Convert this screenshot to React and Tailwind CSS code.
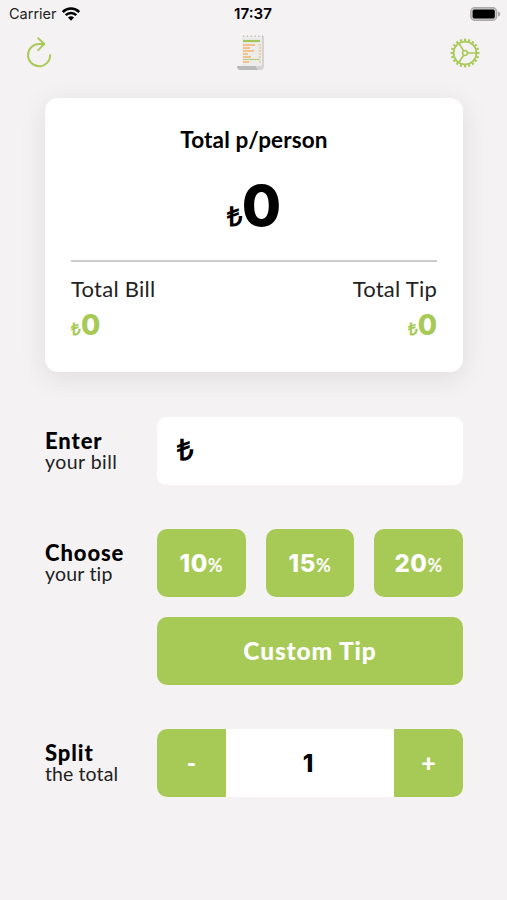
import React, { useState } from 'react';

const teeth = Array.from({ length: 20 }, (_, i) => i * 18);

const ResetIcon = () => (
  <svg width="26" height="32" viewBox="0 0 26 32" fill="none" stroke="#a9ca58" strokeWidth="1.9" strokeLinecap="round" strokeLinejoin="round">
    <path d="M24.2 17.9A11.1 11.1 0 1 1 13.1 7H18" />
    <path d="M12.2 1.2L18.3 7L12.2 13.2" />
  </svg>
);

const GearIcon = () => (
  <svg width="30" height="30" viewBox="-15 -15 30 30" fill="none" stroke="#a9ca58" strokeWidth="1.7">
    <circle r="11.4" />
    <circle r="2.5" />
    <path d="M2.6 0H11.3M-1.4 -2.2L-6.1 -9.6M-1.4 2.2L-6.1 9.6" />
    {teeth.map((angle) => (
      <path key={angle} d="M12 0H14.4" strokeWidth="2.2" transform={`rotate(${angle})`} />
    ))}
  </svg>
);

const ReceiptIcon = () => (
  <svg width="28" height="36" viewBox="0 0 28 36">
    <path d="M5 1H27V31Q27 35 23 35H4Q0 35 0 31H5Z" fill="#d3d3d3" />
    <path d="M5 1H25V31H5Z" fill="#ececea" />
    <path d="M0 31H19Q19 34 22 35H4Q0 35 0 31Z" fill="#b9bbbb" />
    <path d="M6 1.2H26" stroke="#bbb" strokeWidth="1.6" strokeDasharray="1.3 2.5" />
    <path d="M6 6H23" stroke="#a1c65b" strokeWidth="2.2" />
    <path d="M6 10H18M6 13H13M6 16H17M6 19H11M6 22H14M6 27H12" stroke="#f4b26f" strokeWidth="1.4" />
    <path d="M21.5 10H24M22 13H24M21.5 16H24M22 19H24M21.5 22H24M22 27H24" stroke="#efc694" strokeWidth="1.3" />
    <path d="M6 24.5H23" stroke="#b7cf80" strokeWidth="1.2" />
  </svg>
);

const WifiIcon = () => (
  <svg width="18" height="14" viewBox="0 0 18 14" fill="none" stroke="#000" strokeWidth="2.5">
    <path d="M.8 5A11.6 11.6 0 0 1 17.2 5" />
    <path d="M3.7 8.2A7.5 7.5 0 0 1 14.3 8.2" />
    <path d="M6 10.6A4.3 4.3 0 0 1 12 10.6L9 13.7Z" fill="#000" stroke="none" />
  </svg>
);

const BatteryIcon = () => (
  <svg width="31" height="14" viewBox="0 0 31 14">
    <rect x=".8" y=".8" width="25.8" height="12.4" rx="3.8" fill="#d0cfcf" stroke="#aaa" strokeWidth="1.4" />
    <rect x="2.6" y="2.6" width="22.2" height="8.8" rx="1.6" fill="#000" />
    <path d="M28 4.6Q30.4 5.2 30.4 7T28 9.4Z" fill="#aaa" />
  </svg>
);

const Label = ({ title, text, spacing }) => (
  <div className="w-28 h-[68px] shrink-0 flex flex-col justify-center">
    <p className="text-[22px] leading-[21px] font-black tracking-[0.9px]">{title}</p>
    <p className={`text-[19.5px] leading-[22px] text-[#222] ${spacing}`}>{text}</p>
  </div>
);

const Amount = () => (
  <p className="pt-[6px] leading-[32px] font-extrabold tracking-normal text-[#a7ca57]">
    <span className="text-[17px] font-['Open_Sans',sans-serif]">₺</span>
    <span className="text-[28px] font-[Inter,sans-serif]">0</span>
  </p>
);

const App = () => {
  const [people, setPeople] = useState(1);

  return (
    <div className="h-[900px] w-full overflow-hidden bg-[#f4f2f3] text-black font-[Lato,'Open_Sans',sans-serif]">
      <div className="h-7 grid grid-cols-3 items-center pl-[9px] pr-[6px] font-[Inter,sans-serif] text-[14.5px]">
        <div className="flex items-center gap-[5px]">
          <span className="text-[#222]">Carrier</span>
          <WifiIcon />
        </div>
        <span className="pr-1 text-center text-[15.2px] font-semibold">17:37</span>
        <div className="flex justify-end"><BatteryIcon /></div>
      </div>

      <header className="h-12 flex items-center justify-between pl-[26px] pr-[27px] pt-px">
        <ResetIcon />
        <ReceiptIcon />
        <GearIcon />
      </header>

      <main className="px-[45px] pt-[22px] w-[508px]">
        <section className="h-[274px] rounded-[13px] bg-white px-[26px] pt-[29px] shadow-[0_6px_28px_rgba(0,0,0,0.09)]">
          <h1 className="text-center text-[22.5px] leading-[26px] font-bold tracking-[0.15px]">Total p/person</h1>
          <div className="h-[109px] pt-[19px] flex justify-center items-baseline border-b-2 border-[#cbcbcb] font-extrabold">
            <span className="text-[27px] font-['Open_Sans',sans-serif]">₺</span>
            <span className="text-[57px] leading-[68px] font-[Inter,sans-serif]">0</span>
          </div>
          <div className="flex justify-between pt-[13px] tracking-[0.25px]">
            <div>
              <p className="text-[22px] leading-[28px] text-[#222]">Total Bill</p>
              <Amount />
            </div>
            <div className="text-right">
              <p className="text-[22px] leading-[28px] text-[#222]">Total Tip</p>
              <Amount />
            </div>
          </div>
        </section>

        <section className="flex mt-[45px]">
          <Label title="Enter" text="your bill" spacing="tracking-[0.45px]" />
          <div className="flex-1 h-[68px] rounded-[9px] bg-white flex items-center px-5 pb-1 text-[29px] font-extrabold font-['Open_Sans',sans-serif]">₺</div>
        </section>

        <section className="flex mt-11">
          <Label title="Choose" text="your tip" spacing="tracking-[0.2px]" />
          <div className="flex-1 grid grid-cols-3 gap-x-5 gap-y-[20px] text-white">
            {[10, 15, 20].map((tip) => (
              <button key={tip} className="h-[68px] rounded-[10px] bg-[#a7ca57] pt-px text-[24px] font-extrabold tracking-[0.6px] font-[Inter,sans-serif]">
                {tip}<span className="text-[18px] font-bold font-[Lato,sans-serif]">%</span>
              </button>
            ))}
            <button className="col-span-3 h-[68px] rounded-[10px] bg-[#a7ca57] text-[24.5px] font-black tracking-[0.85px]">Custom Tip</button>
          </div>
        </section>

        <section className="flex mt-11">
          <Label title="Split" text="the total" spacing="tracking-[0.1px]" />
          <div className="flex-1 h-[68px] flex overflow-hidden rounded-[10px] bg-white text-[25px] font-black">
            <button onClick={() => setPeople(Math.max(1, people - 1))} className="w-[69px] bg-[#a7ca57] text-white">-</button>
            <div className="flex-1 flex items-center justify-center pt-px pr-1 text-[24px] font-extrabold font-[Inter,sans-serif]">{people}</div>
            <button onClick={() => setPeople(people + 1)} className="w-[69px] bg-[#a7ca57] text-white">+</button>
          </div>
        </section>
      </main>
    </div>
  );
};

export default App;
